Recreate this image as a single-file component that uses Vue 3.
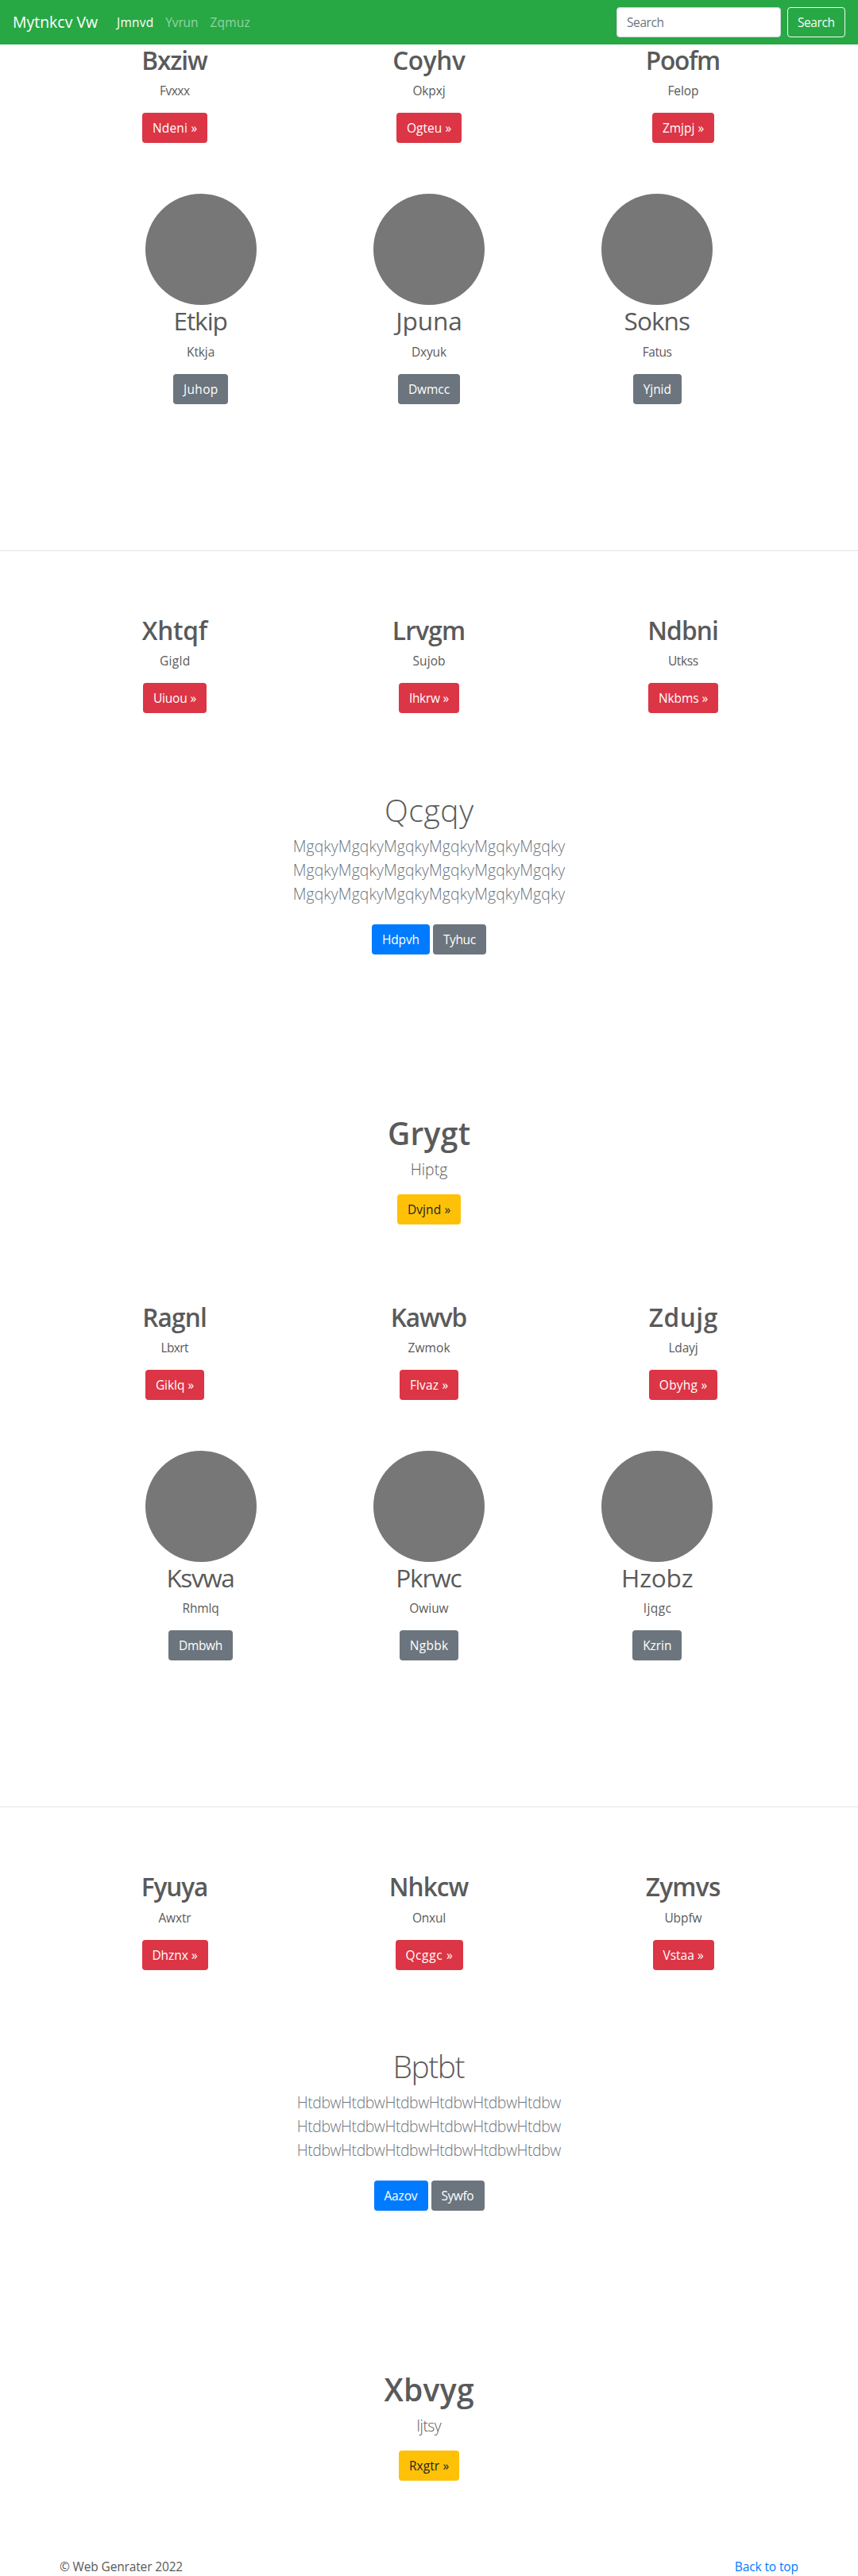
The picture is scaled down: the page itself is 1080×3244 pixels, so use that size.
<script setup>
// Tracks a label so that its glyphs span the given width in pixels.
const vFit = {
  mounted(el, { value }) {
    const size = parseFloat(getComputedStyle(el).fontSize)
    const target = value + size * 0.08
    const spacing = (target - el.getBoundingClientRect().width) / (el.textContent.length - 1)
    el.style.letterSpacing = `${spacing}px`
    el.style.marginRight = `${-spacing}px`
  },
}

const links = [['Jmnvd', 45], ['Yvrun', 40], ['Zqmuz', 49]]

// Each label is stored with its width; buttons carry their outer width.
const blocks = [
  {
    top: [
      { title: ['Bxziw', 81], text: ['Fvxxx', 37], btn: ['Ndeni »', 82] },
      { title: ['Coyhv', 89], text: ['Okpxj', 40], btn: ['Ogteu »', 82] },
      { title: ['Poofm', 92], text: ['Felop', 38], btn: ['Zmjpj »', 78] },
    ],
    people: [
      { title: ['Etkip', 66], text: ['Ktkja', 34], btn: ['Juhop', 69] },
      { title: ['Jpuna', 81], text: ['Dxyuk', 43], btn: ['Dwmcc', 78] },
      { title: ['Sokns', 81], text: ['Fatus', 36], btn: ['Yjnid', 61] },
    ],
    bottom: [
      { title: ['Xhtqf', 80], text: ['Gigld', 37], btn: ['Uiuou »', 80] },
      { title: ['Lrvgm', 90], text: ['Sujob', 40], btn: ['Ihkrw »', 76] },
      { title: ['Ndbni', 87], text: ['Utkss', 37], btn: ['Nkbms »', 88] },
    ],
    album: { title: ['Qcgqy', 109], line: ['MgqkyMgqkyMgqkyMgqkyMgqkyMgqky', 341], main: ['Hdpvh', 73], alt: ['Tyhuc', 67] },
    promo: { title: ['Grygt', 101], text: ['Hiptg', 45], btn: ['Dvjnd »', 80] },
  },
  {
    top: [
      { title: ['Ragnl', 79], text: ['Lbxrt', 34], btn: ['Giklq »', 74] },
      { title: ['Kawvb', 94], text: ['Zwmok', 52], btn: ['Flvaz »', 74] },
      { title: ['Zdujg', 84], text: ['Ldayj', 36], btn: ['Obyhg »', 86] },
    ],
    people: [
      { title: ['Ksvwa', 84], text: ['Rhmlq', 45], btn: ['Dmbwh', 81] },
      { title: ['Pkrwc', 81], text: ['Owiuw', 48], btn: ['Ngbbk', 74] },
      { title: ['Hzobz', 88], text: ['Ijqgc', 34], btn: ['Kzrin', 62] },
    ],
    bottom: [
      { title: ['Fyuya', 82], text: ['Awxtr', 40], btn: ['Dhznx »', 83] },
      { title: ['Nhkcw', 98], text: ['Onxul', 41], btn: ['Qcggc »', 85] },
      { title: ['Zymvs', 92], text: ['Ubpfw', 46], btn: ['Vstaa »', 77] },
    ],
    album: { title: ['Bptbt', 88], line: ['HtdbwHtdbwHtdbwHtdbwHtdbwHtdbw', 331], main: ['Aazov', 68], alt: ['Sywfo', 67] },
    promo: { title: ['Xbvyg', 110], text: ['Ijtsy', 30], btn: ['Rxgtr »', 76] },
  },
]
</script>

<template>
  <header class="navbar">
    <a class="brand"><span v-fit="105.5">Mytnkcv Vw</span></a>
    <nav class="links">
      <a v-for="([label, w], i) in links" :key="label" :class="{ active: i === 0 }">
        <span v-fit="w">{{ label }}</span>
      </a>
    </nav>
    <form class="search" @submit.prevent>
      <input type="text" placeholder="Search" aria-label="Search" />
      <button type="submit"><span v-fit="46">Search</span></button>
    </form>
  </header>

  <main>
    <div v-for="(block, b) in blocks" :key="b" class="block">
      <section class="row">
        <div v-for="c in block.top" :key="c.title[0]" class="col">
          <h2><span v-fit="c.title[1]">{{ c.title[0] }}</span></h2>
          <p><span v-fit="c.text[1]">{{ c.text[0] }}</span></p>
          <a class="btn danger" :style="{ width: c.btn[1] + 'px' }"><span v-fit="c.btn[1] - 27">{{ c.btn[0] }}</span></a>
        </div>
      </section>

      <section class="row people">
        <div v-for="c in block.people" :key="c.title[0]" class="col">
          <svg class="avatar" width="140" height="140" viewBox="0 0 140 140"><circle cx="70" cy="70" r="70" fill="#777" /></svg>
          <h2 class="regular"><span v-fit="c.title[1]">{{ c.title[0] }}</span></h2>
          <p><span v-fit="c.text[1]">{{ c.text[0] }}</span></p>
          <a class="btn secondary" :style="{ width: c.btn[1] + 'px' }"><span v-fit="c.btn[1] - 27">{{ c.btn[0] }}</span></a>
        </div>
      </section>

      <hr />

      <section class="row">
        <div v-for="c in block.bottom" :key="c.title[0]" class="col">
          <h2><span v-fit="c.title[1]">{{ c.title[0] }}</span></h2>
          <p><span v-fit="c.text[1]">{{ c.text[0] }}</span></p>
          <a class="btn danger" :style="{ width: c.btn[1] + 'px' }"><span v-fit="c.btn[1] - 27">{{ c.btn[0] }}</span></a>
        </div>
      </section>

      <section class="album">
        <h1><span v-fit="block.album.title[1]">{{ block.album.title[0] }}</span></h1>
        <div v-for="n in 3" :key="n" class="lead muted"><span v-fit="block.album.line[1]">{{ block.album.line[0] }}</span></div>
        <div class="actions">
          <a class="btn primary" :style="{ width: block.album.main[1] + 'px' }"><span v-fit="block.album.main[1] - 27">{{ block.album.main[0] }}</span></a>
          <a class="btn secondary" :style="{ width: block.album.alt[1] + 'px' }"><span v-fit="block.album.alt[1] - 27">{{ block.album.alt[0] }}</span></a>
        </div>
      </section>

      <section class="promo">
        <h1 class="bold"><span v-fit="block.promo.title[1]">{{ block.promo.title[0] }}</span></h1>
        <div class="lead"><span v-fit="block.promo.text[1]">{{ block.promo.text[0] }}</span></div>
        <a class="btn warning" :style="{ width: block.promo.btn[1] + 'px' }"><span v-fit="block.promo.btn[1] - 27">{{ block.promo.btn[0] }}</span></a>
      </section>
    </div>
  </main>

  <footer>
    <span v-fit="154">© Web Genrater 2022</span>
    <a><span v-fit="79">Back to top</span></a>
  </footer>
</template>

<style>
body {
  margin: 0;
  background: #fff;
  color: #5a5a5a;
  font: 400 15.5px/24px "Open Sans", "Noto Sans", sans-serif;
}
#app {
  height: 3244px;
  overflow: hidden;
}
</style>

<style scoped>
* {
  box-sizing: border-box;
}
span {
  display: inline-block;
  white-space: nowrap;
}
.navbar {
  display: flex;
  align-items: center;
  height: 56px;
  padding: 0 16px;
  background: #28a745;
  color: #fff;
}
.brand {
  width: 107px;
  margin-right: 16px;
  font-size: 19.4px;
  line-height: 30px;
}
.links {
  display: flex;
  gap: 15px;
  padding-left: 8px;
  color: rgba(255, 255, 255, 0.5);
}
.links .active {
  color: #fff;
}
.search {
  display: flex;
  gap: 8px;
  margin-left: auto;
}
.search input {
  width: 207px;
  height: 38px;
  padding: 6px 12px;
  border: 1px solid #ced4da;
  border-radius: 4px;
  background: #fff;
  font: inherit;
  letter-spacing: -0.4px;
}
.search input::placeholder {
  color: #6c757d;
  opacity: 1;
}
.search button {
  width: 73px;
  height: 38px;
  padding: 0;
  border: 1px solid #f8f9fa;
  border-radius: 4px;
  background: transparent;
  color: #f8f9fa;
  font: inherit;
}
.row {
  display: flex;
  width: 960px;
  margin: 0 auto;
  text-align: center;
}
.people {
  width: 862px;
  margin-top: 64px;
}
.col {
  flex: 1;
}
.avatar {
  display: block;
  margin: 0 auto;
}
h2 {
  height: 38.4px;
  margin: 0 0 8px;
  font-size: 31.6px;
  font-weight: 600;
  line-height: 40.4px;
}
h2.regular {
  font-weight: 400;
}
p {
  height: 24px;
  margin: 0 0 16px;
}
.btn {
  display: flex;
  justify-content: center;
  height: 38px;
  margin: 0 auto;
  padding: 6px 0;
  border: 1px solid transparent;
  border-radius: 4px;
  color: #fff;
}
.danger {
  background: #dc3545;
}
.secondary {
  background: #6c757d;
}
.primary {
  background: #007bff;
}
.warning {
  background: #ffc107;
  color: #212529;
}
.block {
  height: 1582.5px;
}
hr {
  height: 1px;
  margin: 184.2px 0 80px;
  border: 0;
  background: #e3e3e3;
}
.album,
.promo {
  text-align: center;
}
.album {
  padding-top: 97.2px;
}
h1 {
  margin: 0 0 8px;
  font-size: 39px;
  font-weight: 300;
  line-height: 48px;
}
h1.bold {
  font-weight: 600;
}
.lead {
  height: 30px;
  font-size: 19.4px;
  font-weight: 300;
  line-height: 28.8px;
}
.muted {
  color: #6c757d;
}
.actions {
  display: flex;
  justify-content: center;
  gap: 4px;
  margin-top: 22px;
}
.actions .btn {
  margin: 0;
}
.promo {
  padding-top: 201px;
}
.promo .btn {
  margin-top: 15px;
}
footer {
  display: flex;
  justify-content: space-between;
  width: 930px;
  margin: -1px auto 0;
}
footer a {
  color: #007bff;
}
</style>
